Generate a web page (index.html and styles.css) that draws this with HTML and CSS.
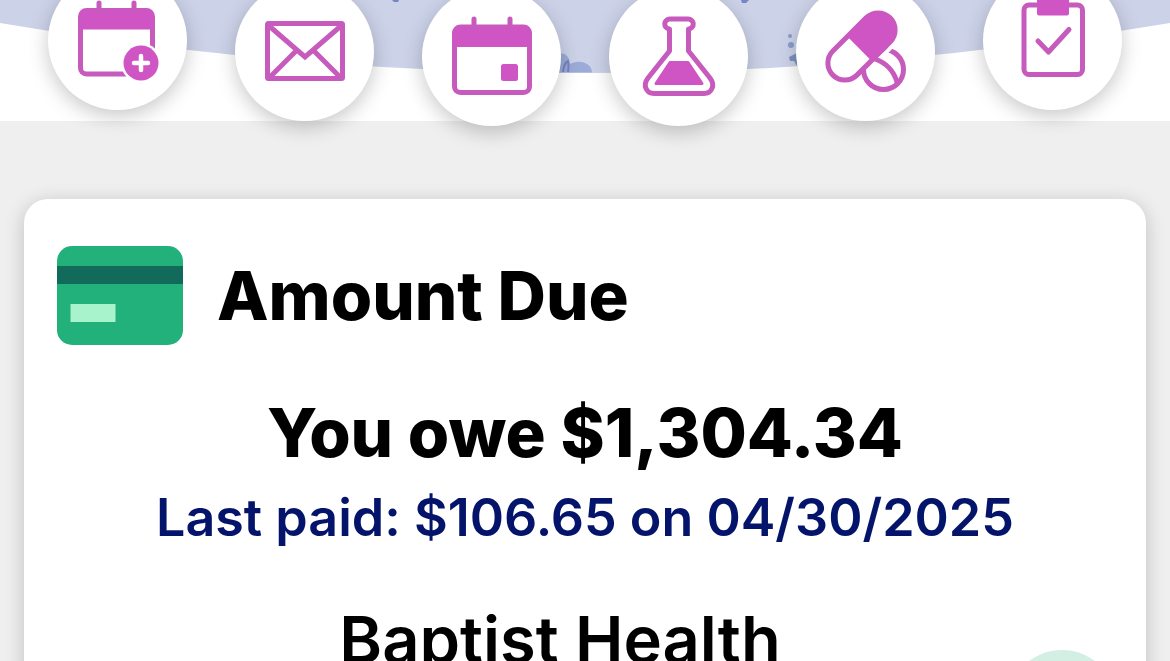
FILE: index.html
```
<!DOCTYPE html>
<html lang="en">
<head>
    <meta charset="UTF-8">
    <meta name="viewport" content="width=device-width, initial-scale=1.0">
    <title>Amount Due</title>
    <link rel="stylesheet" href="styles.css">
</head>
<body>
    <div class="screen">
        <header class="hero">
            <svg class="hero-art" viewBox="0 0 1170 121" preserveAspectRatio="none" aria-hidden="true">
                <path d="M0 0H1170V23Q585 123 0 23Z" fill="#ccd2e8"/>
                <!-- leaves and bushes -->
                <path d="M392 0h7l-1 2h-4zM741 0h8l-3 3h-4z" fill="#7486c4"/>
                <path d="M555 72.500V56q9-6 14 3l1 5q8-4 15-1 7 3 7 9.500z" fill="#9dabd8"/>
                <path d="M563 72q1-9 5-11 1 4 0 11" fill="none" stroke="#7486c4" stroke-width="2"/>
                <circle cx="790" cy="36" r="2" fill="#8b9cca"/>
                <circle cx="791" cy="45" r="3" fill="#8b9cca"/>
                <path d="M789 57l8-4v13l-3-5-4 0z" fill="#7d93bd"/>
            </svg>
            <nav class="shortcuts">
                <button class="shortcut" type="button">
                    <svg viewBox="0 0 139 139" aria-hidden="true">
                        <rect class="line" x="32.5" y="39.5" width="72" height="63.5" rx="6"/>
                        <path class="solid" d="M32 58.500V43q0-4 4-4h65q4 0 4 4v15.500z"/>
                        <path class="line" d="M51 40V32M86 40V32"/>
                        <circle cx="93" cy="92" r="20" fill="#fff"/>
                        <circle class="solid" cx="93" cy="92" r="17.500"/>
                        <path d="M93 85v14M86 92h14" stroke="#fff" stroke-width="4.500" stroke-linecap="round"/>
                    </svg>
                </button>
                <button class="shortcut mid" type="button">
                    <svg viewBox="0 0 139 139" aria-hidden="true">
                        <rect class="line" x="32.5" y="41.500" width="75" height="55" rx="1"/>
                        <path class="line miter" d="M33 43L70 75 107 43M34 96L61 69M106 96L79 69"/>
                    </svg>
                </button>
                <button class="shortcut low" type="button">
                    <svg viewBox="0 0 139 139" aria-hidden="true">
                        <rect class="line" x="32.5" y="40" width="75" height="65.5" rx="6"/>
                        <path class="solid" d="M32 60V44q0-4 4-4h68q4 0 4 4v16z"/>
                        <path class="line" d="M52 40V32M88 40V32"/>
                        <rect class="solid" x="79" y="77" width="17" height="17" rx="2.5"/>
                    </svg>
                </button>
                <button class="shortcut low" type="button">
                    <svg viewBox="0 0 139 139" aria-hidden="true">
                        <path class="line" d="M60.500 42A5 5 0 0 1 61 32H79A5 5 0 0 1 79.500 42V64L101 91C107 99 102 106.500 95 106.500H45C38 106.500 33 99 39 91L60.500 64Z"/>
                        <path class="solid soft" d="M61 75.500H79L93 96.500H47Z"/>
                    </svg>
                </button>
                <button class="shortcut mid" type="button">
                    <svg viewBox="0 0 139 139" aria-hidden="true">
                        <circle class="line" cx="87.500" cy="87.500" r="20"/>
                        <path class="line" d="M79 77Q96 83 101 100"/>
                        <g transform="translate(65.500 64.500) rotate(-45)">
                            <path d="M-23.500-17H23.500A17 17 0 0 1 23.500 17H-23.500A17 17 0 0 1-23.500-17Z" fill="#fff"/>
                            <path d="M9 21.500H28" stroke="#fff" stroke-width="4"/>
                            <rect class="line" x="-40.500" y="-17" width="81" height="34" rx="17"/>
                            <path class="solid" d="M-3-17H23.500A17 17 0 0 1 23.500 17H-3Z"/>
                        </g>
                    </svg>
                </button>
                <button class="shortcut" type="button">
                    <svg viewBox="0 0 139 139" aria-hidden="true">
                        <rect class="line" x="41" y="34" width="58.500" height="69.500" rx="5"/>
                        <rect class="solid" x="54" y="26" width="32" height="18.500" rx="2"/>
                        <path class="line" d="M55 70L65.500 81 86 58.500"/>
                    </svg>
                </button>
            </nav>
        </header>

        <main class="card">
            <div class="card-header">
                <svg class="card-icon" viewBox="0 0 126 99" aria-hidden="true">
                    <rect width="126" height="99" rx="15" fill="#22b17b"/>
                    <rect y="20" width="126" height="18" fill="#126b5a"/>
                    <rect x="13.500" y="58" width="45" height="18" fill="#a8f3cb"/>
                </svg>
                <h1 class="title">Amount Due</h1>
            </div>
            <p class="owed">You owe $1,304.34</p>
            <p class="last-paid">Last paid: $106.65 on 04/30/2025</p>
            <div class="account">
                <h2 class="provider">Baptist Health</h2>
                <span class="account-badge"></span>
            </div>
        </main>
    </div>
</body>
</html>
```
FILE: styles.css
```
*{
    box-sizing: border-box;
}
body{
    margin: 0;
    background: #efefef;
    color: #000;
    font-family: Inter, "Liberation Sans", sans-serif;
}
.screen{
    height: 100vh;
    overflow: hidden;
}

/* curved banner with the round shortcuts hanging over its edge */
.hero{
    position: relative;
    display: flow-root;
    background: #fff;
}
.hero-art{
    position: absolute;
    top: 0;
    left: 0;
    width: 100%;
    height: 100%;
}
.shortcuts{
    position: relative;
    display: flex;
    justify-content: space-between;
    align-items: flex-start;
    margin: -29px 0 -5px;
    padding: 0 48px;
}
.shortcut{
    width: 139px;
    height: 139px;
    padding: 0;
    border: 0;
    border-radius: 50%;
    background: #fff;
    box-shadow: 0 6px 20px rgba(0, 0, 0, 0.22);
    cursor: pointer;
}
.shortcut.mid{
    margin-top: 11px;
}
.shortcut.low{
    margin-top: 16px;
}
.shortcut svg{
    display: block;
    width: 100%;
}
.line{
    fill: none;
    stroke: #c75bbd;
    stroke-width: 5;
    stroke-linecap: round;
    stroke-linejoin: round;
}
.miter{
    stroke-linejoin: miter;
    stroke-linecap: butt;
}
.solid{
    fill: #cf55c5;
}
.soft{
    stroke: #cf55c5;
    stroke-width: 3;
    stroke-linejoin: round;
}

.card{
    margin: 78px 24px 0;
    padding: 47px 33px;
    min-height: 600px;
    border-radius: 24px;
    background: #fff;
    box-shadow: 0 4px 20px rgba(0, 0, 0, 0.2);
}
.card-header{
    display: flex;
    align-items: center;
    gap: 34px;
    margin-bottom: 48px;
}
.card-icon{
    width: 126px;
    height: 99px;
}
.title, .owed, .last-paid, .provider{
    margin: 0;
    white-space: nowrap;
}
.title, .owed{
    font-size: 67px;
    line-height: 80px;
    font-weight: 800;
}
.owed, .last-paid, .provider{
    text-align: center;
}
.last-paid{
    margin: 13px 0 50px;
    font-size: 52px;
    line-height: 64px;
    font-weight: 600;
    color: #04146b;
}
.account{
    display: grid;
    grid-template-columns: 1fr 110px;
    margin-right: -4px;
    padding-left: 56px;
}
.provider{
    font-size: 65px;
    line-height: 80px;
    font-weight: 600;
}
.account-badge{
    height: 110px;
    margin-top: 50px;
    border-radius: 50%;
    background: #d3efe3;
}
```
